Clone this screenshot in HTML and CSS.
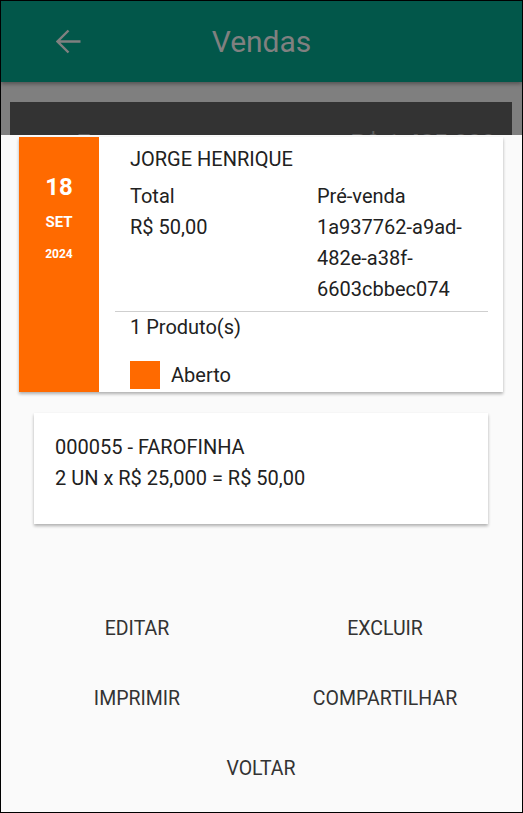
FILE: index.html
```html
<!DOCTYPE html>
<html lang="pt">
<head>
    <meta charset="UTF-8">
    <meta name="viewport" content="width=device-width, initial-scale=1.0">
    <title>Vendas</title>
    <link rel="stylesheet" href="styles.css">
</head>
<body>
    <div class="screen">
        <header class="app-bar">
            <div class="app-bar-left">
                <svg class="back-icon" width="25" height="25" viewBox="0 0 25 25">
                    <path d="M1.5 12.5H24.5M12.5 1.5L1.5 12.5L12.5 23.5" fill="none" stroke="#808080" stroke-width="2.4"/>
                </svg>
            </div>
            <div class="app-bar-title">Vendas</div>
            <div></div>
        </header>

        <div class="backdrop">
            <div class="summary-card">
                <span>F</span>
                <span>R$ 1.485,000</span>
            </div>
        </div>

        <div class="sheet">
            <div class="sale-card">
                <div class="date-strip">
                    <div class="date-day">18</div>
                    <div class="date-month">SET</div>
                    <div class="date-year">2024</div>
                </div>
                <div class="sale-body">
                    <div class="client-name">JORGE HENRIQUE</div>
                    <div class="sale-info">
                        <div>
                            <div>Total</div>
                            <div>R$ 50,00</div>
                        </div>
                        <div>
                            <div>Pré-venda</div>
                            <div>1a937762-a9ad-<wbr>482e-<wbr>a38f-<wbr>6603cbbec074</div>
                        </div>
                    </div>
                    <div class="divider"></div>
                    <div class="products-count">1 Produto(s)</div>
                    <div class="status-row">
                        <span class="status-box"></span>
                        <span>Aberto</span>
                    </div>
                </div>
            </div>

            <div class="item-card">
                <div>000055 - FAROFINHA</div>
                <div>2 UN x R$ 25,000 = R$ 50,00</div>
            </div>

            <div class="actions">
                <button class="action-button">Editar</button>
                <button class="action-button">Excluir</button>
                <button class="action-button">Imprimir</button>
                <button class="action-button">Compartilhar</button>
                <button class="action-button wide">Voltar</button>
            </div>
        </div>
    </div>
</body>
</html>
```

FILE: styles.css
```css
body {
    margin: 0;
    font-family: Roboto, "Noto Sans", sans-serif;
    background-color: #fafafa;
}

.screen {
    width: 523px;
    height: 813px;
    border: 1px solid #000;
    box-sizing: border-box;
    display: flex;
    flex-direction: column;
    overflow: hidden;
    background-color: #fafafa;
}

.app-bar {
    height: 81px;
    flex-shrink: 0;
    background-color: #02574a;
    display: grid;
    grid-template-columns: 1fr auto 1fr;
    align-items: center;
    box-shadow: 0px 2px 4px rgba(0, 0, 0, 0.35);
    position: relative;
    z-index: 1;
}

.app-bar-left {
    padding-left: 55px;
    display: flex;
    align-items: center;
}

.back-icon {
    display: block;
    margin-top: -1px;
}

.app-bar-title {
    color: #808080;
    font-size: 30px;
    line-height: 81px;
}

.backdrop {
    height: 53px;
    flex-shrink: 0;
    background-color: #7f7f7f;
    padding: 20px 10px 0 9px;
    box-sizing: border-box;
    overflow: hidden;
}

.summary-card {
    height: 60px;
    background-color: #333;
    display: flex;
    justify-content: space-between;
    padding: 27px 17px 0 67px;
    box-sizing: border-box;
    color: #5e5e5e;
    font-size: 24px;
    font-weight: bold;
}

.sheet {
    flex: 1;
    background-color: #fafafa;
    display: flex;
    flex-direction: column;
    color: #212121;
    font-size: 20px;
    line-height: 31px;
}

.sale-card {
    display: flex;
    margin: 2px 19px 0 18px;
    background: white;
    box-shadow: 0px 2px 3px rgba(0, 0, 0, 0.3);
}

.date-strip {
    width: 80px;
    flex-shrink: 0;
    background-color: #ff6a00;
    color: white;
    font-weight: bold;
    text-align: center;
    padding-top: 34px;
}

.date-day {
    font-size: 24px;
    line-height: 32px;
}

.date-month {
    font-size: 15px;
    line-height: 38px;
}

.date-year {
    font-size: 12px;
    line-height: 26px;
}

.sale-body {
    flex: 1;
    padding: 7px 0 3px;
}

.client-name,
.sale-info,
.products-count,
.status-row {
    padding-left: 31px;
    padding-right: 15px;
}

.sale-info {
    display: grid;
    grid-template-columns: 187px 1fr;
    margin-top: 6px;
}

.divider {
    height: 1px;
    background-color: #cfcfcf;
    margin: 6px 15px 0 16px;
}

.status-row {
    display: flex;
    align-items: center;
    margin-top: 18px;
    line-height: 28px;
}

.status-box {
    width: 30px;
    height: 28px;
    background-color: #ff6a00;
    margin-right: 11px;
}

.item-card {
    margin: 21px 34px 0 33px;
    padding: 19px 21px 30px;
    background: white;
    box-shadow: 0px 2px 3px rgba(0, 0, 0, 0.3);
}

.actions {
    display: grid;
    grid-template-columns: 1fr 1fr;
    padding: 0 13px 0 12px;
    margin-top: 70px;
}

.action-button {
    background: none;
    border: none;
    padding: 0;
    font-family: Roboto, "Noto Sans", sans-serif;
    font-size: 19.5px;
    line-height: 70px;
    color: #333;
    text-transform: uppercase;
    cursor: pointer;
}

.action-button.wide {
    grid-column: 1 / 3;
}
```
